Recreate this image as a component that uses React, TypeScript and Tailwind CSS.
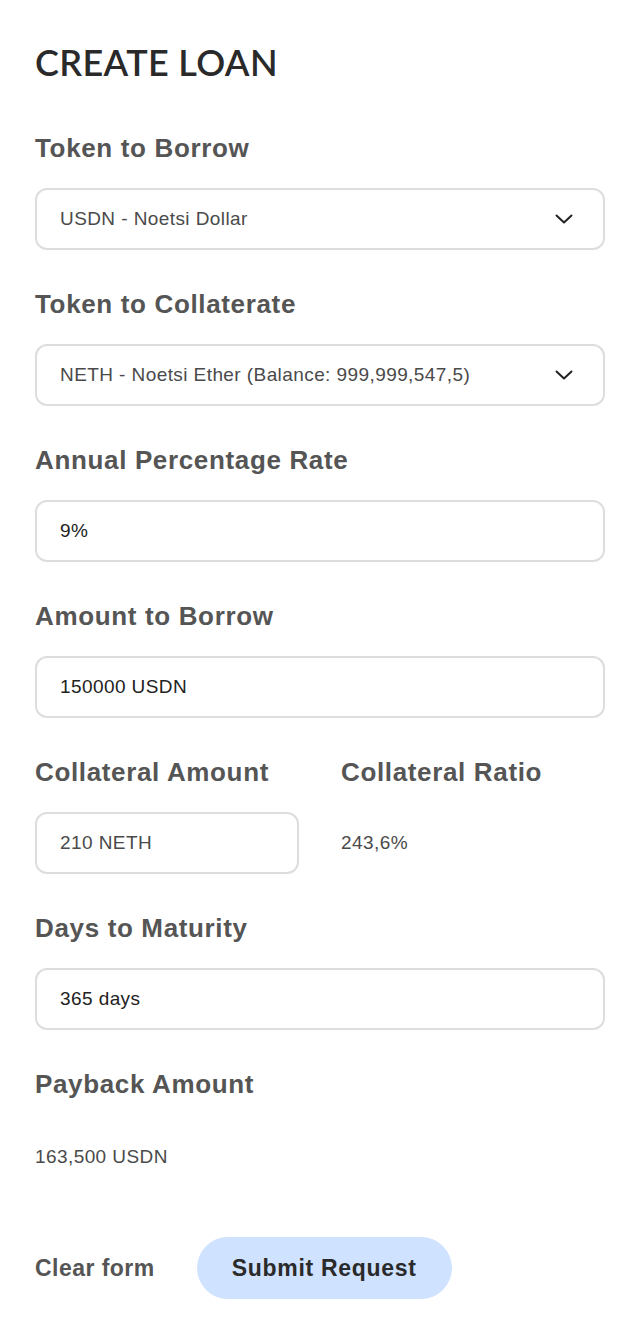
import React from "react";

function ChevronDown() {
  return (
    <svg width="18" height="10" viewBox="0 0 18 10" fill="none" stroke="#222" strokeWidth="2" strokeLinecap="round" strokeLinejoin="round">
      <path d="M1.5 1.5l7.5 7 7.5-7" />
    </svg>
  );
}

function Label({ children }: { children: React.ReactNode }) {
  return <h2 className="text-[26px] leading-[30px] tracking-[0.025em] font-bold text-[#555555]">{children}</h2>;
}

function Field({ value, select, dark }: { value: string; select?: boolean; dark?: boolean }) {
  return (
    <div className="flex items-center justify-between h-[62px] mt-[25px] pl-[23px] pr-[30px] border-2 border-[#dddddd] rounded-[12px] bg-white">
      <span className={`text-[19px] tracking-[0.022em] ${dark ? "text-[#222222]" : "text-[#4a4a4a]"}`}>{value}</span>
      {select && <ChevronDown />}
    </div>
  );
}

export default function App() {
  return (
    <main className="w-full min-h-screen bg-white px-[35px] pt-[42px] pb-[40px] font-['Liberation_Sans',Arial,sans-serif]">
      <h1 className="text-[36px] leading-[40px] tracking-[0.01em] text-[#2a2a2a] font-semibold font-['Lato',sans-serif]">
        CREATE LOAN
      </h1>

      <section className="mt-[51px]">
        <Label>Token to Borrow</Label>
        <Field value="USDN - Noetsi Dollar" select />
      </section>

      <section className="mt-[39px]">
        <Label>Token to Collaterate</Label>
        <Field value="NETH - Noetsi Ether (Balance: 999,999,547,5)" select />
      </section>

      <section className="mt-[39px]">
        <Label>Annual Percentage Rate</Label>
        <Field value="9%" dark />
      </section>

      <section className="mt-[39px]">
        <Label>Amount to Borrow</Label>
        <Field value="150000 USDN" dark />
      </section>

      <section className="mt-[39px] grid grid-cols-2 gap-x-[42px]">
        <div>
          <Label>Collateral Amount</Label>
          <Field value="210 NETH" />
        </div>
        <div>
          <Label>Collateral Ratio</Label>
          <div className="flex items-center h-[62px] mt-[25px] text-[19px] tracking-[0.022em] text-[#4a4a4a]">243,6%</div>
        </div>
      </section>

      <section className="mt-[39px]">
        <Label>Days to Maturity</Label>
        <Field value="365 days" dark />
      </section>

      <section className="mt-[39px]">
        <Label>Payback Amount</Label>
        <p className="mt-[46px] text-[19px] leading-[24px] tracking-[0.022em] text-[#4a4a4a]">163,500 USDN</p>
      </section>

      <div className="mt-[68px] flex items-center gap-[42px]">
        <button className="text-[23px] tracking-[0.02em] font-bold text-[#555555]">Clear form</button>
        <button className="h-[62px] w-[255px] rounded-full bg-[#cfe2ff] text-[23px] tracking-[0.03em] font-bold text-[#2a2a2a]">
          Submit Request
        </button>
      </div>
    </main>
  );
}
